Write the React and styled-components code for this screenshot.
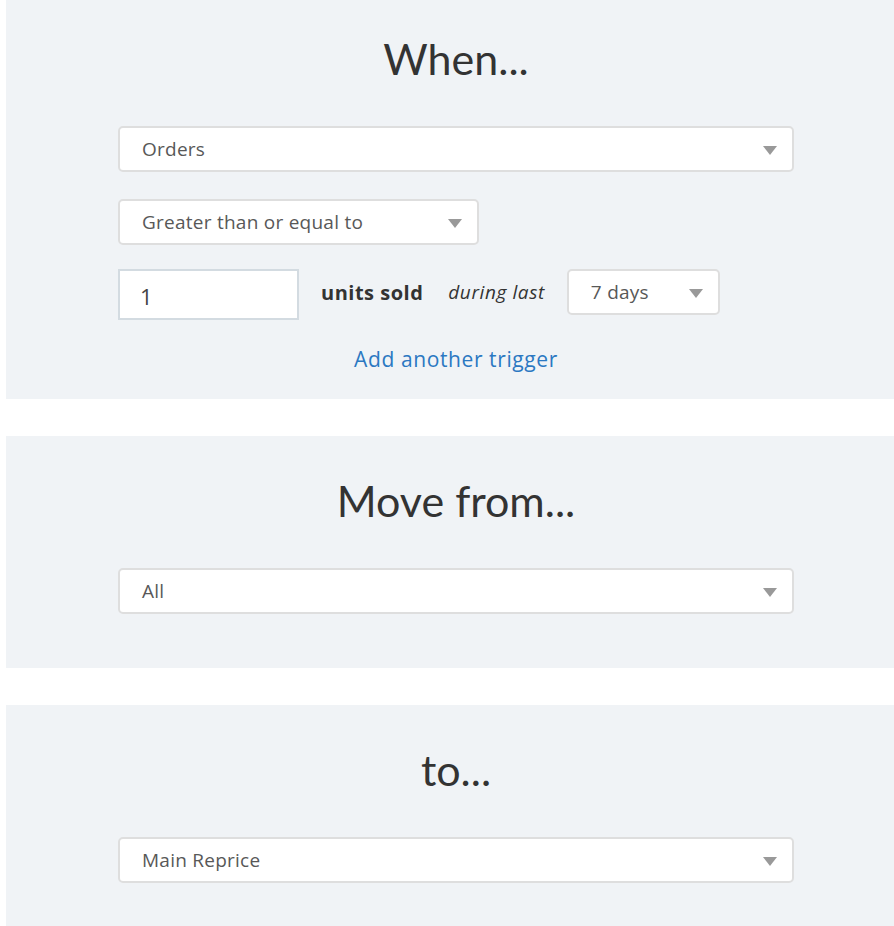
import React from 'react'
import styled, { createGlobalStyle } from 'styled-components'

const GlobalStyle = createGlobalStyle`
    html, body {
        margin: 0;
        padding: 0;
        background: #ffffff;
        overflow: hidden;
        font-family: "Open Sans", "Lato", sans-serif;
    }
`

const Dropdown = ({ value, width }) => (
    <Select width={width}>
        <span>{value}</span>
        <Caret />
    </Select>
)

const App = () => {
    return (
        <>
            <GlobalStyle />
            <Page>
                <Panel>
                    <Title>When...</Title>
                    <Controls>
                        <Dropdown value="Orders" />
                        <Dropdown value="Greater than or equal to" width="361px" />
                        <Row>
                            <NumberInput defaultValue="1" />
                            <Units>units sold</Units>
                            <During>during last</During>
                            <Dropdown value="7 days" width="153px" />
                        </Row>
                    </Controls>
                    <AddLink href="#">Add another trigger</AddLink>
                </Panel>
                <Panel>
                    <Title>Move from...</Title>
                    <Controls>
                        <Dropdown value="All" />
                    </Controls>
                </Panel>
                <Panel>
                    <Title>to...</Title>
                    <Controls>
                        <Dropdown value="Main Reprice" />
                    </Controls>
                </Panel>
            </Page>
        </>
    )
}

export default App

const Page = styled.div`
    width: 900px;
    margin: -6px 0 0 6px;
    display: flex;
    flex-direction: column;
    gap: 37px;
`
const Panel = styled.section`
    background: #f0f3f6;
    padding: 43px 0 54px;
    display: flex;
    flex-direction: column;
    align-items: center;
    &:first-child {
        padding-bottom: 27px;
    }
`
const Title = styled.h2`
    margin: 0 0 46px;
    font-family: "Lato", sans-serif;
    font-size: 43px;
    line-height: 43px;
    font-weight: 400;
    color: #333333;
`
const Controls = styled.div`
    width: 676px;
    display: flex;
    flex-direction: column;
    align-items: flex-start;
    gap: 27px;
`
const Select = styled.div`
    box-sizing: border-box;
    width: ${props => props.width || '100%'};
    height: 46px;
    padding: 0 15px 0 22px;
    display: flex;
    align-items: center;
    justify-content: space-between;
    background: #ffffff;
    border: 2px solid #dedede;
    border-radius: 5px;
    font-size: 19px;
    letter-spacing: 0.25px;
    color: #585858;
`
const Caret = styled.span`
    width: 0;
    height: 0;
    border-left: 7px solid transparent;
    border-right: 7px solid transparent;
    border-top: 9px solid #999999;
    margin-top: 2px;
`
const Row = styled.div`
    display: flex;
    align-items: flex-start;
    margin-top: -3px;
`
const NumberInput = styled.input`
    box-sizing: border-box;
    width: 181px;
    height: 51px;
    padding: 2px 20px 0;
    border: 2px solid #d3dbe1;
    background: #ffffff;
    font-family: inherit;
    font-size: 22px;
    color: #444444;
    outline: none;
`
const Units = styled.span`
    margin-left: 22px;
    font-size: 20px;
    line-height: 47px;
    font-weight: 700;
    letter-spacing: 0.5px;
    color: #333333;
`
const During = styled.span`
    margin: 0 22px 0 25px;
    font-size: 19px;
    line-height: 47px;
    font-style: italic;
    letter-spacing: 0.6px;
    color: #333333;
`
const AddLink = styled.a`
    margin-top: 27px;
    font-size: 21px;
    line-height: 25px;
    letter-spacing: 0.6px;
    color: #2b78c2;
    text-decoration: none;
`
